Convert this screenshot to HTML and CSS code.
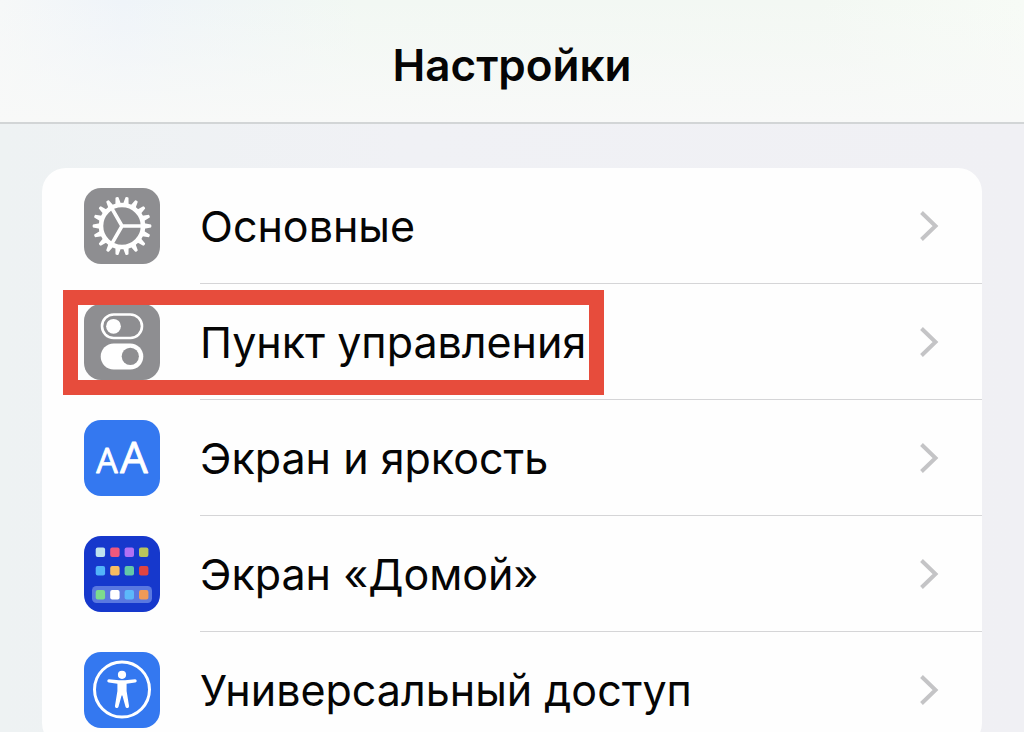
FILE: index.html
```html
<!DOCTYPE html>
<html lang="ru">
<head>
    <meta charset="UTF-8">
    <meta name="viewport" content="width=device-width, initial-scale=1.0">
    <title>Настройки</title>
    <link rel="stylesheet" href="styles.css">
</head>
<body>
    <header class="header">
        <h1>Настройки</h1>
    </header>
    <main class="content">
        <nav class="settings">
            <a class="row" href="#general">
                <svg class="icon gray" viewBox="0 0 76 76" aria-hidden="true">
                    <defs>
                        <path id="teeth" d="M21 -3L29 -1.5Q30 0 29 1.5L21 3ZM-21 -3L-29 -1.5Q-30 0 -29 1.5L-21 3Z"/>
                    </defs>
                    <g fill="#fff" transform="translate(38 38)">
                        <use href="#teeth"/>
                        <use href="#teeth" transform="rotate(20)"/>
                        <use href="#teeth" transform="rotate(40)"/>
                        <use href="#teeth" transform="rotate(60)"/>
                        <use href="#teeth" transform="rotate(80)"/>
                        <use href="#teeth" transform="rotate(100)"/>
                        <use href="#teeth" transform="rotate(120)"/>
                        <use href="#teeth" transform="rotate(140)"/>
                        <use href="#teeth" transform="rotate(160)"/>
                        <circle r="21" fill="none" stroke="#fff" stroke-width="4.6"/>
                        <path d="M0 0H20M0 0L-10 -17.3M0 0L-10 17.3" stroke="#fff" stroke-width="3.6"/>
                    </g>
                </svg>
                <span class="row-body">
                    <span class="label">Основные</span>
                    <svg class="chevron" viewBox="0 0 20 32" aria-hidden="true"><path d="M2.5 2.5L16.5 16L2.5 29.5"/></svg>
                </span>
            </a>
            <a class="row" href="#control-center">
                <svg class="icon gray" viewBox="0 0 76 76" aria-hidden="true">
                    <rect x="18" y="10.5" width="40" height="23.5" rx="11.7" fill="none" stroke="#fff" stroke-width="2.6"/>
                    <circle cx="29.5" cy="22.3" r="7.4" fill="#fff"/>
                    <rect x="16.7" y="39.5" width="42.6" height="26" rx="13" fill="#fff"/>
                    <circle cx="46.3" cy="52.3" r="8.6" fill="#8e8e91"/>
                </svg>
                <span class="row-body">
                    <span class="label highlight">Пункт управления</span>
                    <svg class="chevron" viewBox="0 0 20 32" aria-hidden="true"><path d="M2.5 2.5L16.5 16L2.5 29.5"/></svg>
                </span>
            </a>
            <a class="row" href="#display">
                <svg class="icon blue" viewBox="0 0 76 76" aria-hidden="true">
                    <g class="letters">
                        <text x="23" y="53" font-size="34">A</text>
                        <text x="50" y="53" font-size="44">A</text>
                    </g>
                </svg>
                <span class="row-body">
                    <span class="label">Экран и яркость</span>
                    <svg class="chevron" viewBox="0 0 20 32" aria-hidden="true"><path d="M2.5 2.5L16.5 16L2.5 29.5"/></svg>
                </span>
            </a>
            <a class="row" href="#home-screen">
                <svg class="icon navy" viewBox="0 0 76 76" aria-hidden="true">
                    <rect x="8" y="50" width="60" height="17" rx="4.5" fill="#5a78e0"/>
                    <rect x="11.7" y="11.5" width="9.4" height="9.4" rx="2" fill="#bfe3ee"/>
                    <rect x="26.2" y="11.5" width="9.4" height="9.4" rx="2" fill="#f0587c"/>
                    <rect x="40.6" y="11.5" width="9.4" height="9.4" rx="2" fill="#b070f4"/>
                    <rect x="55" y="11.5" width="9.4" height="9.4" rx="2" fill="#b9c45c"/>
                    <rect x="11.7" y="30" width="9.4" height="9.4" rx="2" fill="#52b4fa"/>
                    <rect x="26.2" y="30" width="9.4" height="9.4" rx="2" fill="#f7bd62"/>
                    <rect x="40.6" y="30" width="9.4" height="9.4" rx="2" fill="#63c8a8"/>
                    <rect x="55" y="30" width="9.4" height="9.4" rx="2" fill="#e04440"/>
                    <rect x="11.7" y="54" width="9.4" height="9.4" rx="2" fill="#7ddc8c"/>
                    <rect x="26.2" y="54" width="9.4" height="9.4" rx="2" fill="#fff"/>
                    <rect x="40.6" y="54" width="9.4" height="9.4" rx="2" fill="#5cb8fa"/>
                    <rect x="55" y="54" width="9.4" height="9.4" rx="2" fill="#f09a58"/>
                </svg>
                <span class="row-body">
                    <span class="label">Экран «Домой»</span>
                    <svg class="chevron" viewBox="0 0 20 32" aria-hidden="true"><path d="M2.5 2.5L16.5 16L2.5 29.5"/></svg>
                </span>
            </a>
            <a class="row" href="#accessibility">
                <svg class="icon blue" viewBox="0 0 76 76" aria-hidden="true">
                    <circle cx="38" cy="37.5" r="27.5" fill="none" stroke="#fff" stroke-width="3"/>
                    <circle cx="38" cy="22.8" r="4.1" fill="#fff"/>
                    <path d="M25 27.3L35 28.3H41L51 27.3A1.6 1.6 0 0 1 51.2 30.5L42.6 31.8V39L45 53.8A1.8 1.8 0 0 1 41.5 54.7L38.4 43.5H37.6L34.5 54.7A1.8 1.8 0 0 1 31 53.8L33.4 39V31.8L24.8 30.5A1.6 1.6 0 0 1 25 27.3Z" fill="#fff"/>
                </svg>
                <span class="row-body">
                    <span class="label">Универсальный доступ</span>
                    <svg class="chevron" viewBox="0 0 20 32" aria-hidden="true"><path d="M2.5 2.5L16.5 16L2.5 29.5"/></svg>
                </span>
            </a>
        </nav>
    </main>
</body>
</html>
```
FILE: styles.css
```css
body {
    font-family: Inter, "Liberation Sans", sans-serif;
    background: linear-gradient(90deg, #eef2f3, #f0f1f5 40%, #f0f0f4);
    color: #050505;
    margin: 0;
    height: 100vh;
    overflow: hidden;
}

.header {
    padding: 35px 20px 27px;
    text-align: center;
    background: linear-gradient(180deg, rgba(248, 249, 248, 0), #f8f9f8), linear-gradient(90deg, #f6f8f8, #eff4f9 12%, #f2f8f3 35%, #f3f8f3 80%, #f7fbf6);
    border-bottom: 2px solid #d2d5d6;
}

.header h1 {
    margin: 0;
    font-size: 44px;
    font-weight: 600;
    line-height: 60px;
}

.content {
    padding: 44px 42px;
}

.settings {
    background-color: #fefefe;
    border-radius: 24px;
}

.row {
    display: flex;
    align-items: center;
    gap: 40px;
    padding-left: 42px;
    color: inherit;
    text-decoration: none;
}

.icon {
    flex: none;
    width: 76px;
    height: 76px;
    border-radius: 17px;
}

.gray {
    background-color: #8e8e91;
}

.blue {
    background-color: #3478f0;
}

.navy {
    background-color: #1638cc;
}

.letters {
    font-family: "Open Sans", sans-serif;
    fill: #fff;
    stroke: #fff;
    stroke-width: 0.8;
    stroke-linejoin: round;
    text-anchor: middle;
}

.row-body {
    flex: 1;
    display: flex;
    align-items: center;
    justify-content: space-between;
    padding: 20px 43px 19px 0;
    border-bottom: 1px solid #d5d5d7;
}

.row:last-child .row-body {
    border-bottom: none;
}

.label {
    font-size: 43px;
    line-height: 76px;
}

.highlight {
    position: relative;
}

/* red frame around the icon and its label */
.highlight::after {
    content: "";
    position: absolute;
    inset: -14px -18px -15px -137px;
    border: 15px solid #e74c3c;
}

.chevron {
    width: 20px;
    height: 32px;
    fill: none;
    stroke: #c4c4c6;
    stroke-width: 4;
}
```
